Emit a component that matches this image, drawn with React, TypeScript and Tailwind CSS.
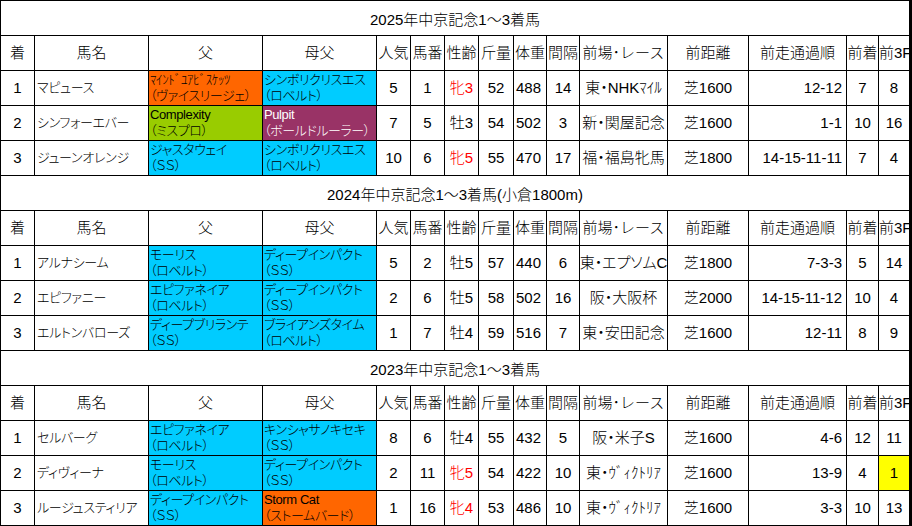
import React from 'react';

type Blood = { top: string; bottom: string; bg: string; light?: boolean };

type Row = {
  pos: string;
  name: string;
  sire: Blood;
  dam: Blood;
  pop: string;
  num: string;
  sex: string;
  mare?: boolean;
  kin: string;
  weight: string;
  gap: string;
  race: string;
  dist: string;
  passing: string;
  prevPos: string;
  last3f: string;
  hi?: boolean;
};

type Section = { title: string; rows: Row[] };

const ORANGE = 'bg-[#ff6600]';
const CYAN = 'bg-[#00ccff]';
const GREEN = 'bg-[#99cc00]';
const PURPLE = 'bg-[#993366]';

const sections: Section[] = [
  {
    title: '2025年中京記念1～3着馬',
    rows: [
      {
        pos: '1', name: 'マピュース',
        sire: { top: 'ﾏｲﾝﾄﾞﾕｱﾋﾞｽｹｯﾂ', bottom: '（ヴァイスリージェ）', bg: ORANGE },
        dam: { top: 'シンボリクリスエス', bottom: '（ロベルト）', bg: CYAN },
        pop: '5', num: '1', sex: '牝3', mare: true, kin: '52', weight: '488', gap: '14',
        race: '東・NHKﾏｲﾙ', dist: '芝1600', passing: '12-12', prevPos: '7', last3f: '8',
      },
      {
        pos: '2', name: 'シンフォーエバー',
        sire: { top: 'Complexity', bottom: '（ミスプロ）', bg: GREEN },
        dam: { top: 'Pulpit', bottom: '（ボールドルーラー）', bg: PURPLE, light: true },
        pop: '7', num: '5', sex: '牡3', kin: '54', weight: '502', gap: '3',
        race: '新・関屋記念', dist: '芝1600', passing: '1-1', prevPos: '10', last3f: '16',
      },
      {
        pos: '3', name: 'ジューンオレンジ',
        sire: { top: 'ジャスタウェイ', bottom: '（ＳＳ）', bg: CYAN },
        dam: { top: 'シンボリクリスエス', bottom: '（ロベルト）', bg: CYAN },
        pop: '10', num: '6', sex: '牝5', mare: true, kin: '55', weight: '470', gap: '17',
        race: '福・福島牝馬', dist: '芝1800', passing: '14-15-11-11', prevPos: '7', last3f: '4',
      },
    ],
  },
  {
    title: '2024年中京記念1～3着馬(小倉1800m)',
    rows: [
      {
        pos: '1', name: 'アルナシーム',
        sire: { top: 'モーリス', bottom: '（ロベルト）', bg: CYAN },
        dam: { top: 'ディープインパクト', bottom: '（ＳＳ）', bg: CYAN },
        pop: '5', num: '2', sex: '牡5', kin: '57', weight: '440', gap: '6',
        race: '東・エプソムC', dist: '芝1800', passing: '7-3-3', prevPos: '5', last3f: '14',
      },
      {
        pos: '2', name: 'エピファニー',
        sire: { top: 'エピファネイア', bottom: '（ロベルト）', bg: CYAN },
        dam: { top: 'ディープインパクト', bottom: '（ＳＳ）', bg: CYAN },
        pop: '2', num: '6', sex: '牡5', kin: '58', weight: '502', gap: '16',
        race: '阪・大阪杯', dist: '芝2000', passing: '14-15-11-12', prevPos: '10', last3f: '4',
      },
      {
        pos: '3', name: 'エルトンバローズ',
        sire: { top: 'ディープブリランテ', bottom: '（ＳＳ）', bg: CYAN },
        dam: { top: 'ブライアンズタイム', bottom: '（ロベルト）', bg: CYAN },
        pop: '1', num: '7', sex: '牡4', kin: '59', weight: '516', gap: '7',
        race: '東・安田記念', dist: '芝1600', passing: '12-11', prevPos: '8', last3f: '9',
      },
    ],
  },
  {
    title: '2023年中京記念1～3着馬',
    rows: [
      {
        pos: '1', name: 'セルバーグ',
        sire: { top: 'エピファネイア', bottom: '（ロベルト）', bg: CYAN },
        dam: { top: 'キンシャサノキセキ', bottom: '（ＳＳ）', bg: CYAN },
        pop: '8', num: '6', sex: '牡4', kin: '55', weight: '432', gap: '5',
        race: '阪・米子S', dist: '芝1600', passing: '4-6', prevPos: '12', last3f: '11',
      },
      {
        pos: '2', name: 'ディヴィーナ',
        sire: { top: 'モーリス', bottom: '（ロベルト）', bg: CYAN },
        dam: { top: 'ディープインパクト', bottom: '（ＳＳ）', bg: CYAN },
        pop: '2', num: '11', sex: '牝5', mare: true, kin: '54', weight: '422', gap: '10',
        race: '東・ｳﾞｨｸﾄﾘｱ', dist: '芝1600', passing: '13-9', prevPos: '4', last3f: '1', hi: true,
      },
      {
        pos: '3', name: 'ルージュスティリア',
        sire: { top: 'ディープインパクト', bottom: '（ＳＳ）', bg: CYAN },
        dam: { top: 'Storm Cat', bottom: '（ストームバード）', bg: ORANGE },
        pop: '1', num: '16', sex: '牝4', mare: true, kin: '53', weight: '486', gap: '10',
        race: '東・ｳﾞｨｸﾄﾘｱ', dist: '芝1600', passing: '3-3', prevPos: '10', last3f: '13',
      },
    ],
  },
];

const headers = ['着', '馬名', '父', '母父', '人気', '馬番', '性齢', '斤量', '体重', '間隔', '前場･レース', '前距離', '前走通過順', '前着'];

// 罫線は grid の gap で描く
const box = 'h-[34px] flex items-center overflow-hidden whitespace-nowrap';
const cell = `bg-white ${box}`;

function BloodCell({ b }: { b: Blood }) {
  return (
    <div className={`${b.bg} h-[34px] flex flex-col justify-center overflow-hidden whitespace-nowrap pl-px text-[13px] leading-[16px] tracking-[-0.4px] [font-feature-settings:'palt'] ${b.light ? 'text-white' : 'text-black'}`}>
      <span>{b.top}</span>
      <span>{b.bottom}</span>
    </div>
  );
}

function DataRow({ r }: { r: Row }) {
  return (
    <>
      <div className={`${cell} justify-center`}>{r.pos}</div>
      <div className={`${cell} pl-0.5 text-[13px] tracking-[-0.3px] [font-feature-settings:'palt']`}>{r.name}</div>
      <BloodCell b={r.sire} />
      <BloodCell b={r.dam} />
      <div className={`${cell} justify-center`}>{r.pop}</div>
      <div className={`${cell} justify-center`}>{r.num}</div>
      <div className={`${cell} justify-center ${r.mare ? 'text-[#ff0000]' : ''}`}>{r.sex}</div>
      <div className={`${cell} justify-center`}>{r.kin}</div>
      <div className={`${cell} pl-0.5`}>{r.weight}</div>
      <div className={`${cell} justify-center`}>{r.gap}</div>
      <div className={`${cell} justify-center [font-feature-settings:'palt']`}>{r.race}</div>
      <div className={`${cell} justify-center`}>{r.dist}</div>
      <div className={`${cell} justify-end pr-1`}>{r.passing}</div>
      <div className={`${cell} justify-center`}>{r.prevPos}</div>
      <div className={`${box} justify-center ${r.hi ? 'bg-[#ffff00]' : 'bg-white'}`}>{r.last3f}</div>
    </>
  );
}

export default function App() {
  return (
    <div className="w-[912px] h-[526px] overflow-hidden bg-white font-['Liberation_Sans','Noto_Sans_CJK_JP',sans-serif] font-light text-[15px] text-black">
      <div className="grid grid-cols-[33px_113px_113px_113px_33px_33px_33px_34px_32px_32px_87px_80px_97px_31px_30px] gap-px bg-black pt-px pl-px pb-px pr-[3px]">
        {sections.map(s => (
          <React.Fragment key={s.title}>
            {/* 見出し行 */}
            <div className={`${cell} col-span-15 justify-center pt-1`}>{s.title}</div>
            {headers.map(h => (
              <div key={h} className={`${cell} justify-center`}>{h}</div>
            ))}
            <div className={`${cell} justify-start`}>前3F</div>
            {s.rows.map(r => (
              <DataRow key={r.pos} r={r} />
            ))}
          </React.Fragment>
        ))}
      </div>
    </div>
  );
}
